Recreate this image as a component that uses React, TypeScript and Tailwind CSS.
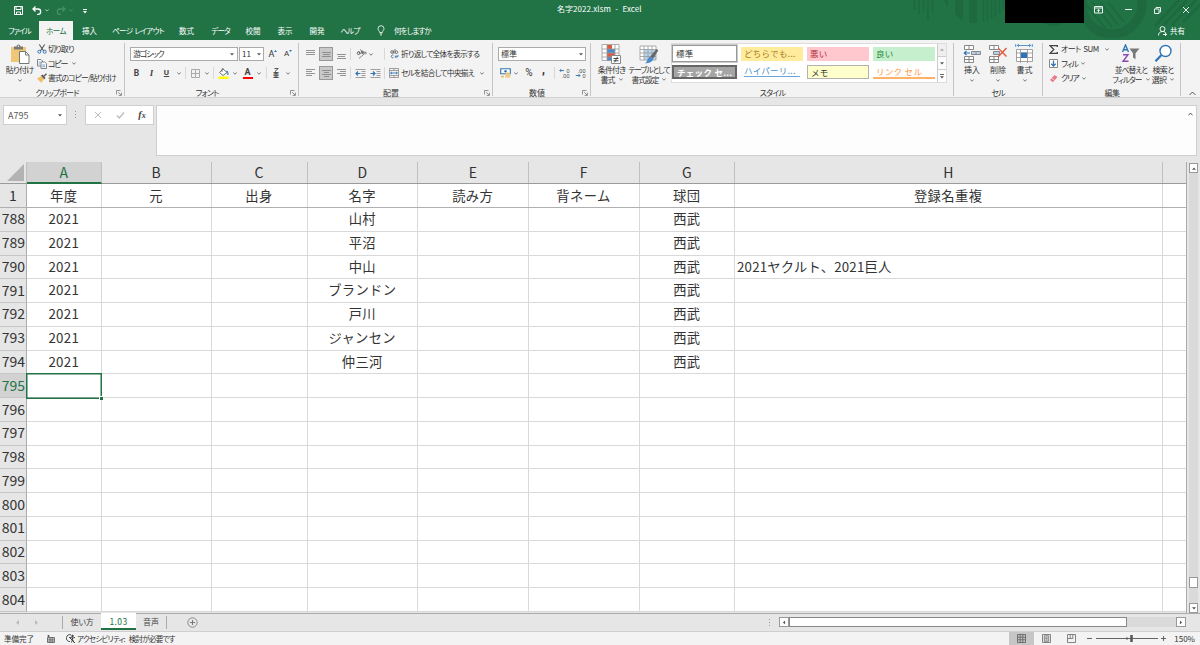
import React from 'react';

interface BoxProps {
  className?: string;
  children?: React.ReactNode;
}

// Fixed width slot that centers its content
const Slot: React.FC<BoxProps> = ({ className = '', children }) => (
  <div className={`flex shrink-0 items-center justify-center ${className}`}>{children}</div>
);

const Chevron: React.FC<{ className?: string }> = ({ className = '' }) => (
  <svg className={`shrink-0 ${className}`} width="4" height="3" viewBox="0 0 4 3" fill="none" stroke="#666" strokeWidth="0.9">
    <path d="M.3 .6 2 2.2 3.7 .6" />
  </svg>
);

const Caret: React.FC = () => (
  <svg className="shrink-0" width="4" height="3" viewBox="0 0 4 3" fill="#555"><path d="M0 .3h4L2 2.6z" /></svg>
);

const Divider: React.FC = () => <div className="h-3 w-px shrink-0 bg-[#d8d8d8]" />;

interface GroupProps {
  label: string;
  className: string;
  labelClass?: string;
  launcher?: boolean;
  children: React.ReactNode;
}

const Group: React.FC<GroupProps> = ({ label, className, labelClass = 'tracking-[-0.4px]', launcher, children }) => (
  <div className={`relative flex shrink-0 flex-col ${className}`}>
    <div className="h-[46px]">{children}</div>
    <div className={`flex h-[12px] items-center justify-center pt-[3px] text-[8px] leading-none ${labelClass}`}>{label}</div>
    {launcher && (
      <svg className="absolute right-[3px] bottom-[1px]" width="6" height="6" viewBox="0 0 6 6" fill="none" stroke="#777" strokeWidth="0.8">
        <path d="M.5 4.5v-4h4M2.2 2.2l3 3M5.4 2.6v2.8H2.6" />
      </svg>
    )}
    <div className="absolute right-0 top-[3px] h-[53px] w-px bg-[#c4c4c4]" />
  </div>
);

/* ---------- Icons ---------- */

const PasteIcon = () => (
  <svg width="20" height="20" viewBox="0 0 20 20" fill="none">
    <path d="M1 3h15v15H1z" fill="#f0c777" />
    <path d="M4 2.5h2.5a2 2 0 0 1 4 0H13v3H4z" fill="#777" />
    <circle cx="8.5" cy="2.3" r=".8" fill="#f3f3f3" />
    <path d="M9.5 7.5h6l3.5 3.5v8.5H9.5z" fill="#fff" stroke="#777" />
    <path d="M15.5 7.5V11H19" stroke="#777" />
  </svg>
);

const CutIcon = () => (
  <svg width="10" height="10" viewBox="0 0 10 10" fill="none">
    <path d="M2.3.5 6.7 7M7.7.5 3.3 7" stroke="#555" strokeWidth="1.1" />
    <circle cx="2.3" cy="7.7" r="1.5" stroke="#2f75b5" />
    <circle cx="7.7" cy="7.7" r="1.5" stroke="#2f75b5" />
  </svg>
);

const CopyIcon = () => (
  <svg width="10" height="10" viewBox="0 0 10 10" fill="#fff" stroke="#777" strokeWidth="0.9">
    <path d="M.5.5H4L5.5 2v5h-5z" />
    <path d="M4 3h3.7l1.800 1.700v4.800H4z" />
    <path d="M1.500 3h2M1.500 5h2M5.200 6h3M5.200 7.700h3" stroke="#5b9bd5" />
  </svg>
);

const BrushIcon = () => (
  <svg width="10" height="10" viewBox="0 0 10 10">
    <path d="M0 5.500 4.500 3l2.700 3L4 9.700z" fill="#f0bd68" />
    <path d="m4 2.500 1.500-1L8.500 5 7.300 6.200z" fill="#555" />
    <path d="M6.500 2.700 9 .3l.9.9-2.400 2.500z" fill="#555" />
  </svg>
);

const BorderIcon = () => (
  <svg width="9" height="9" viewBox="0 0 9 9" fill="none" stroke="#aaa">
    <path d="M.5.5h8v8h-8zM4.500.5v8M.5 4.500h8" />
  </svg>
);

const FillIcon = () => (
  <svg width="11" height="11" viewBox="0 0 11 11" fill="none">
    <path d="M5 1 9 4.500 5 7.500 1.500 4.500z" fill="#fff" stroke="#666" strokeWidth=".9" />
    <path d="M4 4V.8h1.500" stroke="#666" strokeWidth=".8" />
    <path d="M8.500 3c1.500.5 1.600 2.500 1.300 4" stroke="#2f75b5" strokeWidth="1.100" />
    <path d="M.5 8.500h10V11H.5z" fill="#ff0" />
  </svg>
);

const LinesIcon: React.FC<{ d: string }> = ({ d }) => (
  <svg width="9" height="9" viewBox="0 0 9 9" fill="none" stroke="#888" strokeWidth=".9"><path d={d} /></svg>
);

const OrientationIcon = () => (
  <svg width="11" height="10" viewBox="0 0 11 10" fill="none" stroke="#555" strokeWidth=".9">
    <circle cx="2.500" cy="4.300" r="1.300" /><path d="M2.500 2 4.600 5M4.500.5l2.600 4" /><circle cx="6.400" cy="3.300" r="1.200" />
    <path d="M3 9.500 9.800 3.500M7.800 3.200h2.200v2.200" stroke="#777" />
  </svg>
);

const IndentIcon: React.FC<{ d: string }> = ({ d }) => (
  <svg width="11" height="9" viewBox="0 0 11 9" fill="none">
    <path d="M.5.5h10M6.500 2.500h4M6.500 4.500h4M6.500 6.500h4M.5 8.500h10" stroke="#888" strokeWidth=".8" />
    <path d={d} stroke="#2f75b5" strokeWidth="1.200" />
  </svg>
);

const WrapIcon = () => (
  <svg width="9" height="10" viewBox="0 0 9 10" fill="none" stroke="#666" strokeWidth=".9">
    <circle cx="2" cy="3" r="1.300" /><path d="M3.500 1.500v3M5 0v4.500" /><circle cx="6.500" cy="3.200" r="1.300" />
    <path d="M3.500 6.300a1.400 1.400 0 1 0 0 2.200" /><path d="M8 6v1.700H5.300M6.500 6.300 5 7.700l1.500 1.500" stroke="#2f75b5" />
  </svg>
);

const MergeIcon = () => (
  <svg width="10" height="10" viewBox="0 0 10 10" fill="none">
    <path d="M.5.5h9v9h-9zM.5 2.500h9M.5 7.500h9M5 .5v2M5 7.500v2" stroke="#888" strokeWidth=".8" />
    <path d="M1.500 5h7M3 3.800 1.700 5 3 6.200M7 3.800 8.300 5 7 6.200" stroke="#2f75b5" strokeWidth=".9" />
  </svg>
);

const CurrencyIcon = () => (
  <svg width="11" height="10" viewBox="0 0 11 10" fill="none">
    <path d="M.7.700h9.600v5H.7z" stroke="#2f75b5" strokeWidth="1.100" fill="#fff" />
    <circle cx="5.500" cy="3.200" r="1.200" fill="#2f75b5" />
    <ellipse cx="7.800" cy="5.500" rx="2.500" ry="1" fill="#f0bd68" />
    <path d="M5.300 6.700h5v1h-5zM5.300 8.300h5v1.200h-5zM1 7.700h3v1.700H1z" fill="#f0bd68" />
  </svg>
);

const DecimalIcon: React.FC<{ top: string; bottom: string; arrow: string }> = ({ top, bottom, arrow }) => (
  <svg width="11" height="10" viewBox="0 0 11 10" fontFamily="Liberation Sans" fontSize="5.500" fill="#444">
    <text x="10.500" y="4.500" textAnchor="end">{top}</text>
    <text x="10.500" y="9.500" textAnchor="end">{bottom}</text>
    <path d={arrow} fill="none" stroke="#2f75b5" strokeWidth=".9" />
  </svg>
);

const ConditionalIcon = () => (
  <svg width="21" height="20" viewBox="0 0 21 20" fill="none">
    <path d="M1 1h17v16H1z" fill="#fff" />
    <path d="M6 1h5v4H6zM6 9h8v4H6z" fill="#e0593d" />
    <path d="M6 5h8v4H6zM6 13h4v4H6z" fill="#4a8ac9" />
    <path d="M1 .500h17v16H1zM1 5h17M1 9h17M1 13h17M6 .500v16M14 .500v16" stroke="#999" strokeWidth=".8" />
    <path d="M10.500 11.500h9v8h-9z" fill="#fff" stroke="#888" />
    <path d="M12.500 14.500h5M12.500 16.800h5M16.500 12.800l-3 5.500" stroke="#444" />
  </svg>
);

const TableFormatIcon = () => (
  <svg width="20" height="20" viewBox="0 0 20 20" fill="none">
    <path d="M1 2h16v14H1z" fill="#fff" />
    <path d="M5 5.500h12V16H5z" fill="#b9d5ee" />
    <path d="M1 2h16v14H1zM1 5.500h16M1 9h16M1 12.500h16M5 2v14M9 2v14M13 2v14" stroke="#999" strokeWidth=".8" />
    <path d="m17.500 5 1.800 1.200-5 8.300-3-2z" fill="#666" />
    <path d="m11 12.500 3.300 2.300c-.5 3-4.300 4.500-8.300 4.700 2-1.200 2.500-5 5-7z" fill="#4a8ac9" />
  </svg>
);

const InsertCellsIcon = () => (
  <svg width="18" height="20" viewBox="0 0 18 20" fill="none" stroke="#888">
    <path d="M1.500 1.500h9v4h-9zM6 1.500v4M1.500 12.500h9v6h-9zM6 12.500v6M1.500 15.500h9" fill="#fff" />
    <path d="M8.500 7.500h9v3h-9zM13 7.500v3" fill="#b9d5ee" />
    <path d="M7 9H1.500M3.500 7 1.300 9l2.200 2" stroke="#2f75b5" strokeWidth="1.200" />
  </svg>
);

const DeleteCellsIcon = () => (
  <svg width="20" height="20" viewBox="0 0 20 20" fill="none" stroke="#888">
    <path d="M1.500 1.500h9v4h-9zM6 1.500v4M1.500 12.500h9v6h-9zM6 12.500v6M1.500 15.500h9" fill="#fff" />
    <path d="M5.500 7.500h6v3h-6z" fill="#b9d5ee" />
    <path d="m10.500 4.500 8 8M18.500 4 10 13" stroke="#e0593d" strokeWidth="1.400" />
  </svg>
);

const FormatCellsIcon = () => (
  <svg width="19" height="20" viewBox="0 0 19 20" fill="none">
    <path d="M1.500 5.500h16v12h-16z" fill="#fff" stroke="#999" strokeWidth=".9" />
    <path d="M1.500 9h16M1.500 13.500h16M5.500 5.500V19M12.500 5.500V19" stroke="#999" strokeWidth=".9" />
    <path d="M6 8.500h6v5.500H6z" fill="#2f75b5" />
    <path d="M2 1.500h14M4 0 2.300 1.500 4 3M14 0l1.700 1.500L14 3M.7 0v3M17.300 0v3" stroke="#4a8ac9" strokeWidth=".9" />
  </svg>
);

const SortIcon = () => (
  <svg width="20" height="19" viewBox="0 0 20 19" fill="none">
    <path d="M1.500 8 4.500 1l3 7M2.700 5.800h3.600" stroke="#2f75b5" strokeWidth="1.400" />
    <path d="M2 10.700h5L2 17.300h5.500" stroke="#8c4bb0" strokeWidth="1.400" />
    <path d="M8.500 4.500h10l-4 4.700v6l-2.500-1.700V9.200z" fill="#777" />
  </svg>
);

const FindIcon = () => (
  <svg width="19" height="19" viewBox="0 0 19 19" fill="none" stroke="#2f75b5">
    <circle cx="11.500" cy="7" r="5.500" fill="#fff" strokeWidth="1.400" />
    <path d="M7.500 11 1.500 17.300" strokeWidth="2.200" />
  </svg>
);

/* ---------- Title bar ---------- */

const tabs = [
  { label: 'ファイル', className: 'w-[35px] tracking-[-0.900px]' },
  { label: 'ホーム', className: 'ml-[2px] w-[34px] bg-[#f3f3f3] text-[#217346] tracking-[-0.600px]' },
  { label: '挿入', className: 'w-[33px]' },
  { label: 'ページ レイアウト', className: 'w-[64px] tracking-[-0.650px] [word-spacing:1px]' },
  { label: '数式', className: 'w-[33px]' },
  { label: 'データ', className: 'w-[35px] tracking-[-0.800px]' },
  { label: '校閲', className: 'w-[30px]' },
  { label: '表示', className: 'w-[34px]' },
  { label: '開発', className: 'w-[30px]' },
  { label: 'ヘルプ', className: 'w-[36px] tracking-[-0.800px]' },
];

const Backdrop = () => (
  <svg className="absolute right-0 top-0" width="300" height="40" viewBox="0 0 300 40" fill="none" stroke="#1e693f">
    <path d="M14.500 0v10M19 0v14M23.500 0v11M28 0v20M32.500 0v13" strokeWidth="2" />
    <path d="M44 0h4v8zM55 0h8v21l-8-7zM69 0h8v23h-8z" fill="#1e693f" stroke="none" />
    <path d="M83.500 0v22M87.500 0v21M91.500 0v19M95.500 0v17M99.500 0v14M103.500 0v10" strokeWidth="1.800" />
    <circle cx="212" cy="4" r="30" strokeWidth="9" />
    <path d="M184 2l22 27M192 2l20 25M200 2l18 23M208 2l16 20" strokeWidth="2" />
    <path d="M255 26l24-26M263 26l24-26M272 25l24-25M283 22l17-17" strokeWidth="3" />
    <path d="M143 22c5 5 14 5 20 0z" fill="#1e693f" stroke="none" />
  </svg>
);

const TitleBar = () => (
  <div className="relative h-10 shrink-0 bg-[#217346] text-white">
    <Backdrop />
    <div className="absolute left-[1005px] top-0 h-[22.500px] w-[79px] bg-black" />
    <div className="relative flex h-[21px] items-center pl-[12px]">
      <Slot className="w-3">
        <svg width="9" height="9" viewBox="0 0 9 9" fill="none" stroke="#fff"><path d="M.5.5h8v8h-8zM2 .5v3h5v-3M2.500 8.500V6h4v2.500" /></svg>
      </Slot>
      <Slot className="ml-[7px] w-[11px]">
        <svg width="10" height="9" viewBox="0 0 10 9" fill="none" stroke="#fff" strokeWidth="1.300"><path d="M3.500.5 1 3l2.500 2.500M1 3h5a2.600 2.600 0 0 1 0 5.300H5" /></svg>
      </Slot>
      <svg className="ml-[3px]" width="4" height="3" fill="none" stroke="#a9cbb8"><path d="M.3.500 2 2l1.700-1.500" /></svg>
      <Slot className="ml-[6px] w-[11px]">
        <svg width="10" height="9" viewBox="0 0 10 9" fill="none" stroke="#468e66" strokeWidth="1.300"><path d="M6.500.5 9 3 6.500 5.500M9 3H4a2.600 2.600 0 0 0 0 5.300h1" /></svg>
      </Slot>
      <svg className="ml-[3px]" width="4" height="3" fill="none" stroke="#468e66"><path d="M.3.500 2 2l1.700-1.500" /></svg>
      <svg className="ml-[10px] mt-px" width="4" height="5" fill="#fff"><path d="M0 0h4v1H0zM0 2h4L2 4.500z" /></svg>
      <div className="absolute left-[557px] top-[3px] whitespace-nowrap text-[8px] leading-[12px] tracking-[0.050px] [word-spacing:2.500px]">名字2022.xlsm - Excel</div>
      <div className="absolute left-[1094px] top-0 flex h-5 items-center">
        <svg width="9" height="8" viewBox="0 0 9 8" fill="none" stroke="#e8f1ec"><path d="M.5.5h8v6.500h-8zM.5 2h8M4.500 6.500V3.500M3 4.800l1.500-1.500L6 4.800" /></svg>
        <svg className="ml-[22px]" width="7" height="2"><path d="M0 0h7v1H0z" fill="#e8f1ec" /></svg>
        <svg className="ml-[22px]" width="7" height="7" viewBox="0 0 7 7" fill="none" stroke="#e8f1ec"><path d="M.5 2h4.500v4.500H.5zM2 2V.5h4.500V5H5" /></svg>
        <svg className="ml-[21px]" width="8" height="8" viewBox="0 0 8 8" fill="none" stroke="#e8f1ec"><path d="m1 1 6 6M7 1 1 7" /></svg>
      </div>
    </div>
    <div className="relative flex h-[19px] items-stretch pl-[2px] text-[7.500px] leading-none">
      {tabs.map((tab) => (
        <Slot key={tab.label} className={`whitespace-nowrap ${tab.className}`}>{tab.label}</Slot>
      ))}
      <Slot className="w-[25px]">
        <svg width="8" height="11" viewBox="0 0 8 11" fill="none" stroke="#fff" strokeWidth=".8"><path d="M2.700 7.500C2.700 6 1 5.500 1 3.700a3 3 0 0 1 6 0C7 5.500 5.300 6 5.300 7.500zM2.800 8.800h2.400M3.200 10h1.600" /></svg>
      </Slot>
      <div className="flex items-center pl-px tracking-[-0.800px]">何をしますか</div>
      <div className="ml-auto flex items-center gap-[3px] pr-[15px]">
        <svg width="9" height="10" viewBox="0 0 9 10" fill="none" stroke="#fff" strokeWidth=".9"><circle cx="4.500" cy="3" r="2.500" /><path d="M.5 9.500c0-2.500 1.500-4 4-4s3 1 3.500 2M5 8.500h4M7.500 7v3" /></svg>
        <span>共有</span>
      </div>
    </div>
  </div>
);

/* ---------- Ribbon ---------- */

const BigButton: React.FC<{ icon: React.ReactNode; lines: string[]; className: string }> = ({ icon, lines, className }) => (
  <div className={`flex shrink-0 flex-col items-center whitespace-nowrap pt-[4px] leading-[9.500px] ${className}`}>
    <div className="flex h-[21px] items-start">{icon}</div>
    <div>{lines[0]}</div>
    {lines[1] ? (
      <div className="flex items-center gap-[4px]">{lines[1]}<Chevron /></div>
    ) : (
      <Chevron className="mt-[4px]" />
    )}
  </div>
);

const styleCells = [
  { label: '標準', className: 'border border-[#999] bg-white outline outline-1 outline-[#ccc] text-[#333]' },
  { label: 'どちらでも...', className: 'bg-[#ffeb9c] text-[#a87a1d]' },
  { label: '悪い', className: 'bg-[#ffc7ce] text-[#b0303c]' },
  { label: '良い', className: 'bg-[#c6efce] text-[#2a8a3a]' },
  { label: 'チェック セ...', className: 'border-2 border-[#666] bg-[#a5a5a5] font-bold text-white' },
  { label: 'ハイパーリ...', className: 'mx-[3px] mb-[2px] -indent-[3px] border-b border-[#6aa5dc] bg-white text-[#4a8fd0]' },
  { label: 'メモ', className: 'border border-[#b2b2b2] bg-[#ffffcc] text-[#333]' },
  { label: 'リンク セル', className: 'border-b-2 border-[#ffb069] bg-white text-[#fa9a4a]' },
];

const Ribbon = () => (
  <div className="relative flex h-[58px] shrink-0 border-b border-[#d2d2d2] bg-[#f3f3f3] text-[8px] leading-none text-[#333]">
    <Group label="クリップボード" className="w-[125px]" labelClass="pr-[11px] tracking-[-0.900px]" launcher>
      <div className="flex">
        <BigButton icon={<PasteIcon />} lines={['貼り付け']} className="ml-[4px] w-[31px] tracking-[-0.700px]" />
        <div className="ml-[2px] flex flex-col pt-[2px]">
          <div className="flex h-[14px] items-center gap-px whitespace-nowrap"><CutIcon /><span className="tracking-[-0.900px]">切り取り</span></div>
          <div className="flex h-[15px] items-center gap-px whitespace-nowrap"><CopyIcon /><span className="w-[17px] tracking-[-1.300px]">コピー</span><Chevron className="ml-[6px]" /></div>
          <div className="flex h-[14px] items-center gap-px whitespace-nowrap"><BrushIcon /><span className="text-[7.700px] tracking-[-0.850px]">書式のコピー/貼り付け</span></div>
        </div>
      </div>
    </Group>

    <Group label="フォント" className="w-[174px]" labelClass="pr-[10px] tracking-[-0.800px]" launcher>
      <div className="flex h-[21px] items-end pl-[5px]">
        <div className="flex h-[14px] w-[108px] shrink-0 items-center justify-between border border-[#ababab] bg-white pl-[2px] pr-[3px]"><span className="tracking-[-1.200px]">游ゴシック</span><Caret /></div>
        <div className="ml-px flex h-[14px] w-[25px] shrink-0 items-center justify-between border border-[#ababab] bg-white px-[2px]"><span>11</span><Caret /></div>
        <Slot className="ml-[3px] h-[14px] w-[12px] font-[Roboto] text-[9px]">A<svg className="mb-[6px]" width="3" height="2"><path d="M0 2h3L1.500 0z" fill="#2f75b5" /></svg></Slot>
        <Slot className="ml-[3px] h-[14px] w-[12px] font-[Roboto] text-[8px]">A<svg className="mb-[6px]" width="3" height="2"><path d="M0 0h3L1.500 2z" fill="#2f75b5" /></svg></Slot>
      </div>
      <div className="flex h-[24px] items-center pl-[4px] text-[#444]">
        <Slot className="w-[15px] font-[Roboto] text-[8.500px] font-bold">B</Slot>
        <Slot className="w-[15px] font-[Liberation_Serif] text-[9px] font-bold italic">I</Slot>
        <Slot className="w-[15px] font-[Roboto] text-[8px] font-bold underline">U</Slot>
        <Slot className="mr-[2px] w-[9px]"><Chevron /></Slot>
        <Divider />
        <Slot className="ml-[3px] w-[13px]"><BorderIcon /></Slot>
        <Slot className="mr-[2px] w-[9px]"><Chevron /></Slot>
        <Divider />
        <Slot className="ml-[3px] w-[12px]"><FillIcon /></Slot>
        <Slot className="w-[11px]"><Chevron /></Slot>
        <Slot className="ml-[2px] w-[11px]">
          <div className="flex h-[11px] w-[10px] items-start justify-center border-b-2 border-[#f00] font-[Roboto] text-[9px] font-bold">A</div>
        </Slot>
        <Slot className="mr-[2px] w-[11px]"><Chevron /></Slot>
        <Divider />
        <Slot className="ml-[3px] w-[12px] flex-col font-bold">
          <svg width="5" height="4" viewBox="0 0 5 4" fill="none" stroke="#555"><path d="M.5.500h3.800L2.500 2M2.300 1.800 1.300 3.800" /></svg>
          <span className="text-[6px]">亜</span>
        </Slot>
        <Slot className="w-[12px]"><Chevron /></Slot>
      </div>
    </Group>

    <Group label="配置" className="w-[194px]" labelClass="pr-[10px]" launcher>
      <div className="flex h-[21px] items-end pl-[4px] [&>*]:h-[14px]">
        <Slot className="w-[15px]"><LinesIcon d="M0 .5h9M0 2.500h9M0 4.500h9" /></Slot>
        <Slot className="ml-px w-[14px] border border-[#999] bg-[#c9c9c9]"><LinesIcon d="M0 2.500h9M1 4.500h7M0 6.500h9" /></Slot>
        <Slot className="ml-px w-[15px]"><LinesIcon d="M0 4.500h9M1 6.500h7M0 8.500h9" /></Slot>
        <Slot className="w-[3px]"><Divider /></Slot>
        <Slot className="ml-[3px] w-[12px]"><OrientationIcon /></Slot>
        <Slot className="w-[8px]"><Chevron /></Slot>
        <Slot className="ml-[9px] w-px"><Divider /></Slot>
        <Slot className="ml-[3px] w-[12px]"><WrapIcon /></Slot>
        <div className="ml-px flex items-center whitespace-nowrap text-[7.700px] tracking-[-0.700px]">折り返して全体を表示する</div>
      </div>
      <div className="flex h-[24px] items-center pl-[4px]">
        <Slot className="w-[15px]"><LinesIcon d="M0 .5h9M0 2.500h6M0 4.500h9M0 6.500h6" /></Slot>
        <Slot className="ml-px h-[14px] w-[14px] border border-[#999] bg-[#c9c9c9]"><LinesIcon d="M0 1.500h9M2 3.500h5M0 5.500h9M2 7.500h5" /></Slot>
        <Slot className="ml-px w-[15px]"><LinesIcon d="M0 .5h9M3 2.500h6M0 4.500h9M3 6.500h6" /></Slot>
        <Slot className="w-[3px]"><Divider /></Slot>
        <Slot className="ml-[2px] w-[13px]"><IndentIcon d="M5.500 4.500H1M3 2.500l-2 2 2 2" /></Slot>
        <Slot className="ml-[2px] w-[13px]"><IndentIcon d="M.5 4.500H5M3 2.500l2 2-2 2" /></Slot>
        <Slot className="ml-[2px] w-px"><Divider /></Slot>
        <Slot className="ml-[3px] w-[12px]"><MergeIcon /></Slot>
        <div className="ml-px w-[77px] whitespace-nowrap text-[7.700px] tracking-[-0.650px]">セルを結合して中央揃え</div>
        <Slot className="w-[8px]"><Chevron /></Slot>
      </div>
    </Group>

    <Group label="数値" className="w-[98px]" labelClass="pr-[10px]" launcher>
      <div className="flex h-[21px] items-end pl-[5px]">
        <div className="flex h-[14px] w-[88px] items-center justify-between border border-[#ababab] bg-white px-[2px]"><span>標準</span><Caret /></div>
      </div>
      <div className="flex h-[24px] items-center pl-[6px]">
        <Slot className="w-[12px]"><CurrencyIcon /></Slot>
        <Slot className="w-[10px]"><Chevron /></Slot>
        <Slot className="w-[16px] font-[Roboto] text-[10px]">%</Slot>
        <Slot className="w-[13px] font-[Roboto] text-[12px] font-bold"><span className="-mt-[6px]">,</span></Slot>
        <Slot className="ml-[4px] w-px"><Divider /></Slot>
        <Slot className="ml-[3px] w-[12px]"><DecimalIcon top="0" bottom=".00" arrow="M5 2.500H.8M2.300 1 .8 2.500 2.300 4" /></Slot>
        <Slot className="ml-[4px] w-[12px]"><DecimalIcon top=".00" bottom="0" arrow="M.8 7.500H5M3.500 6 5 7.500 3.500 9" /></Slot>
      </div>
    </Group>

    <Group label="スタイル" className="w-[363px]" labelClass="tracking-[-0.700px]">
      <div className="flex">
        <BigButton icon={<ConditionalIcon />} lines={['条件付き', '書式']} className="ml-[4px] w-[33px] tracking-[-0.900px]" />
        <BigButton icon={<TableFormatIcon />} lines={['テーブルとして', '書式設定']} className="w-[42px] text-[7.700px] tracking-[-1px]" />
        <div className="ml-px mt-[3px] flex h-[40px] w-[276px] justify-between border border-[#ddd] bg-white">
          <div className="grid grid-cols-[65px_62px_62px_62px] grid-rows-[17px_14px] gap-x-[4px] gap-y-[3px] pt-px text-[8.500px]">
            {styleCells.map((cell, i) => (
              <div
                key={cell.label}
                className={`flex items-center overflow-hidden whitespace-nowrap px-[3px] tracking-[0.300px] [font-feature-settings:normal] ${i > 0 && i < 4 ? 'my-[1.500px]' : ''} ${cell.className}`}
              >
                {cell.label}
              </div>
            ))}
          </div>
          <div className="flex w-[9px] flex-col border-l border-[#ccc] bg-[#fdfdfd] *:flex *:flex-1 *:items-center *:justify-center">
            <div className="rotate-180 bg-[#e2e2e2] opacity-50"><Caret /></div>
            <div className="border-y border-[#ccc]"><Caret /></div>
            <div className="flex-col gap-px"><span className="h-px w-1 bg-[#666]" /><Caret /></div>
          </div>
        </div>
      </div>
    </Group>

    <Group label="セル" className="w-[89px]" labelClass="pr-[1px] tracking-[-0.800px]">
      <div className="flex pl-[5px]">
        <BigButton icon={<InsertCellsIcon />} lines={['挿入']} className="w-[26px]" />
        <BigButton icon={<DeleteCellsIcon />} lines={['削除']} className="w-[26px]" />
        <BigButton icon={<FormatCellsIcon />} lines={['書式']} className="w-[27px]" />
      </div>
    </Group>

    <Group label="編集" className="w-[138px]">
      <div className="flex pl-[6px]">
        <div className="flex w-[64px] flex-col pt-[2px]">
          <div className="flex h-[14px] items-center gap-[3px] whitespace-nowrap">
            <svg width="9" height="9" viewBox="0 0 9 9" fill="none" stroke="#444" strokeWidth="1.300"><path d="M8.300 2V.7H1L4.800 4.500 1 8.300h7.300V7" /></svg>
            <span className="tracking-[-0.500px] [word-spacing:1px]">オート SUM</span><Chevron className="ml-[3px]" />
          </div>
          <div className="flex h-[15px] items-center gap-[3px]">
            <svg width="9" height="9" viewBox="0 0 9 9" fill="none"><path d="M.5.5h8v8h-8z" fill="#fff" stroke="#888" /><path d="M4.500 1.500V7M2.300 4.800 4.500 7l2.200-2.200" stroke="#2f75b5" strokeWidth="1.300" /></svg>
            <span className="tracking-[-1.100px]">フィル</span><Chevron />
          </div>
          <div className="flex h-[14px] items-center gap-[3px]">
            <svg width="9" height="9" viewBox="0 0 9 9"><path d="M5.500 1 8.500 3 4 8.300 1 6z" fill="#e8788a" /><path d="M2.700 4.200 5.700 6.500" stroke="#f3f3f3" strokeWidth=".7" /></svg>
            <span className="tracking-[-1.200px]">クリア</span><Chevron />
          </div>
        </div>
        <BigButton icon={<SortIcon />} lines={['並べ替えと', 'フィルター']} className="w-[36px] text-[7.700px] tracking-[-0.900px]" />
        <BigButton icon={<FindIcon />} lines={['検索と', '選択']} className="w-[28px] tracking-[-0.700px]" />
      </div>
    </Group>
    <div className="flex flex-1 items-end justify-center pb-px pl-[3px]">
      <svg width="7" height="5" viewBox="0 0 7 5" fill="none" stroke="#555"><path d="M.5 4 3.500 1l3 3" /></svg>
    </div>
  </div>
);

/* ---------- Formula bar ---------- */

const FormulaBar = () => (
  <div className="flex h-[64px] shrink-0 items-start bg-[#e6e6e6] pl-[3px] pt-[7px]">
    <div className="flex h-5 w-[64px] items-center justify-between border border-[#cfcfcf] bg-white pl-[4px] pr-[4px] text-[9px] text-[#555]"><span className="pt-px">A795</span><Caret /></div>
    <Slot className="h-5 w-[18px]">
      <svg width="2" height="8" fill="#999"><path d="M0 0h1v1H0zM0 3h1v1H0zM0 6h1v1H0z" /></svg>
    </Slot>
    <div className="flex h-5 w-[69px] items-center border border-[#cfcfcf] bg-white">
      <Slot className="w-[23px]"><svg width="8" height="8" fill="none" stroke="#bbb"><path d="m1 1 6 6M7 1 1 7" /></svg></Slot>
      <Slot className="w-[22px]"><svg width="9" height="8" fill="none" stroke="#bbb" strokeWidth="1.300"><path d="M1 4.500 3.300 7 8 1.500" /></svg></Slot>
      <div className="w-[22px] pb-px text-center font-[Liberation_Serif] text-[10px] font-bold italic leading-none text-[#444]">f<span className="text-[8px]">x</span></div>
    </div>
    <div className="ml-[2px] flex h-[51px] w-[1041px] justify-end border border-[#cfcfcf] bg-[#fdfdfd] pr-[3px] pt-[6px]">
      <svg width="5" height="4" viewBox="0 0 5 4" fill="none" stroke="#555"><path d="M.5 3.300 2.500 1l2 2.300" /></svg>
    </div>
  </div>
);

/* ---------- Sheet ---------- */

const columns = ['A', 'B', 'C', 'D', 'E', 'F', 'G', 'H'];
const headings = ['年度', '元', '出身', '名字', '読み方', '背ネーム', '球団', '登録名重複'];
const players = ['山村', '平沼', '中山', 'ブランドン', '戸川', 'ジャンセン', '仲三河'];
const notes: Record<string, string> = { 中山: '2021ヤクルト、2021巨人' };
const rowNumbers = Array.from({ length: 17 }, (_, i) => 788 + i);
const gridCols = 'grid grid-cols-[27px_74.500px_110px_96px_110.500px_110.500px_111px_95.500px_427.500px_24.500px]';

const cellText = (name: string | undefined, col: number) => {
  if (!name) return '';
  if (col === 0) return '2021';
  if (col === 3) return name;
  if (col === 6) return '西武';
  if (col === 7) return notes[name] ?? '';
  return '';
};

const Sheet = () => (
  <div className="flex h-[451px] shrink-0 bg-[#e6e6e6] text-[#333]">
    <div className="w-[1187px] overflow-hidden border-r border-[#ababab] text-[13.300px] leading-none">
      <div className={`${gridCols} h-[22px] border-b border-[#9b9b9b] bg-[#e6e6e6] text-[14px]`}>
        <div className="flex items-end justify-end border-r border-[#c0c0c0] pb-[2px] pr-[2px]">
          <svg width="17" height="17"><path d="M17 0v17H0z" fill="#b3b3b3" /></svg>
        </div>
        {columns.map((name, i) => (
          <div
            key={name}
            className={`flex items-center justify-center border-r border-[#c0c0c0] ${i === 0 ? '-mb-px border-b-2 border-b-[#217346] bg-[#d2d2d2] pb-px text-[#217346]' : 'pb-[2px]'}`}
          >
            {name}
          </div>
        ))}
        <div />
      </div>

      <div className={`${gridCols} h-[24px] border-b border-[#b0b0b0] bg-white tracking-[0.450px]`}>
        <div className="flex items-center justify-center border-r border-[#ababab] bg-[#e6e6e6] pb-[2px] text-[14px]">1</div>
        {headings.map((text) => (
          <div key={text} className="flex items-center justify-center border-r border-[#d9d9d9]">{text}</div>
        ))}
        <div />
      </div>

      {rowNumbers.map((row, r) => (
        <div key={row} className={`${gridCols} h-[23.780px] bg-white tracking-[0.300px]`}>
          <div className={`flex items-center justify-end border-b border-r border-b-[#c6c6c6] border-r-[#ababab] pb-[2px] pr-px text-[14px] tracking-normal ${row === 795 ? 'bg-[#d2d2d2] text-[#217346]' : 'bg-[#e6e6e6]'}`}>
            {row}
          </div>
          {columns.map((col, c) => (
            <div
              key={col}
              className={`relative flex items-center whitespace-nowrap border-b border-r border-[#d9d9d9] pb-[1.500px] ${c === 7 ? 'pl-[2px] tracking-[0.200px]' : 'justify-center'}`}
            >
              {cellText(players[r], c)}
              {row === 795 && c === 0 && (
                <div className="absolute -bottom-[2px] -left-px -right-[1.500px] -top-px z-10 border-[1.500px] border-[#217346] shadow-[inset_0_0_0_0.500px_#217346]">
                  <div className="absolute -bottom-[2px] -right-[2px] size-[4px] border-l border-t border-white bg-[#217346]" />
                </div>
              )}
            </div>
          ))}
          <div className="border-b border-[#d9d9d9]" />
        </div>
      ))}
    </div>

    <div className="flex flex-1 flex-col items-center pt-px">
      <Slot className="h-[10px] w-[9px] border border-[#999] bg-white"><span className="rotate-180"><Caret /></span></Slot>
      <div className="flex w-[9px] flex-1 flex-col justify-end bg-[#dadada] pb-[15px]">
        <div className="h-[11px] border border-[#999] bg-white" />
      </div>
      <Slot className="h-[10px] w-[9px] border border-[#999] bg-white"><Caret /></Slot>
    </div>
  </div>
);

const SheetTabs = () => (
  <div className="flex h-[18px] shrink-0 items-start border-t border-[#ababab] bg-[#e6e6e6] text-[8px] leading-none text-[#444]">
    <div className="flex h-[17px] w-[62px] items-center pl-[16px]">
      <svg width="22" height="5" fill="#bbb"><path d="M3 0v5L0 2.500zM19 0v5l3-2.500z" /></svg>
    </div>
    <div className="mt-[2px] h-[13px] w-px bg-[#ababab]" />
    <Slot className="h-[16px] w-[38px] tracking-[-0.200px]">使い方</Slot>
    <Slot className="-mt-px h-[17px] w-[35px] border-b-2 border-[#217346] bg-white pt-[2px] text-[8.500px] tracking-[0.400px] text-[#217346]">1.03</Slot>
    <Slot className="h-[16px] w-[30px]">音声</Slot>
    <div className="mt-[2px] h-[13px] w-px bg-[#ababab]" />
    <svg className="ml-[20px] mt-[3px]" width="11" height="11" viewBox="0 0 11 11" fill="none" stroke="#777"><circle cx="5.500" cy="5.500" r="4.700" strokeWidth=".8" /><path d="M5.500 3v5M3 5.500h5" /></svg>
    <svg className="ml-auto mt-[5px]" width="2" height="8" fill="#999"><path d="M0 0h1v1H0zM0 3h1v1H0zM0 6h1v1H0z" /></svg>
    <div className="ml-[8px] mr-[14px] mt-[3px] flex h-[10px] w-[407px] bg-[#dadada]">
      <Slot className="w-[10px] border border-[#999] bg-white"><span className="rotate-90"><Caret /></span></Slot>
      <div className="w-[338px] border border-[#888] bg-white" />
      <Slot className="ml-auto w-[10px] border border-[#999] bg-white"><span className="-rotate-90"><Caret /></span></Slot>
    </div>
  </div>
);

const StatusBar = () => (
  <div className="flex h-[14px] shrink-0 items-center border-t border-[#cfcfcf] bg-[#f3f3f3] pl-[4px] text-[7.500px] leading-none text-[#333]">
    <span>準備完了</span>
    <svg className="ml-[13px]" width="8" height="8" viewBox="0 0 8 8" fill="none" stroke="#666" strokeWidth=".9"><path d="M.5 2.500h7v5h-7zM.5 4.200h7M.5 6h7M3 2.500v5M5.200 2.500v5" /><circle cx="1.500" cy="1" r="1" fill="#444" stroke="none" /></svg>
    <svg className="ml-[11px]" width="10" height="9" viewBox="0 0 10 9" fill="none" stroke="#333" strokeWidth=".9"><path d="M5 .8A3.500 3.500 0 1 0 4 7.600M4 3.500l3 .5 2-.5M6.500 4v1.500l-1 3M6.500 5.500l1.500 3M3 3l6 6" /><circle cx="6.500" cy="2" r=".8" fill="#333" /></svg>
    <span className="ml-px whitespace-nowrap tracking-[-0.750px] [word-spacing:3px]">アクセシビリティ: 検討が必要です</span>
    <Slot className="ml-auto h-[13px] w-[25px] bg-[#c6c6c6]">
      <svg width="9" height="9" viewBox="0 0 9 9" fill="none" stroke="#666" strokeWidth=".9"><path d="M.5.5h8v8h-8zM.5 3.200h8M.5 5.800h8M3.200.5v8M5.800.5v8" /></svg>
    </Slot>
    <Slot className="w-[25px]">
      <svg width="9" height="9" viewBox="0 0 9 9" fill="none" stroke="#777" strokeWidth=".9"><path d="M.5.5h8v8h-8zM2.300 1.800h4.400v5.500H2.300zM3.300 3.200h2.400M3.300 4.600h2.400M3.300 6h2.400" /></svg>
    </Slot>
    <Slot className="w-[25px]">
      <svg width="9" height="9" viewBox="0 0 9 9" fill="none" stroke="#777" strokeWidth=".9"><path d="M.5.5h8v8h-8zM3.200.5v4h2.600v-4M.5 4.500h2.700" /></svg>
    </Slot>
    <svg className="ml-[3px]" width="80" height="9" viewBox="0 0 80 9" fill="none" stroke="#555">
      <path d="M0 4.500h5M9 4.500h62M74 4.500h5M76.500 2v5" strokeWidth=".9" />
      <path d="M40 3.200v2.600" /><path d="M44.500 1v7" strokeWidth="2.500" />
    </svg>
    <span className="ml-[7px] mr-[5px] w-[21px] whitespace-nowrap text-right text-[8px]">150%</span>
  </div>
);

export default function App() {
  return (
    <div className="flex h-[645px] w-[1200px] flex-col overflow-hidden bg-[#e6e6e6] font-['Noto_Sans_CJK_JP',sans-serif]">
      <div className="shrink-0 [font-feature-settings:'palt']">
        <TitleBar />
        <Ribbon />
      </div>
      <FormulaBar />
      <Sheet />
      <div className="shrink-0 [font-feature-settings:'palt']">
        <SheetTabs />
        <StatusBar />
      </div>
    </div>
  );
}
